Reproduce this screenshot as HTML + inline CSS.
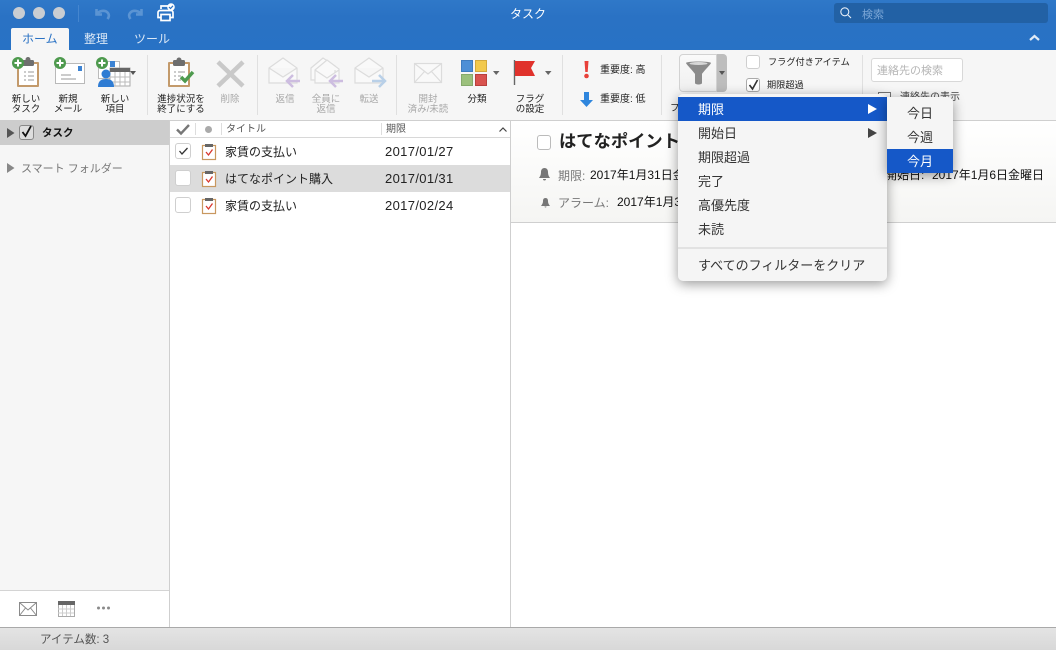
<!DOCTYPE html>
<html lang="ja"><head><meta charset="utf-8"><title>タスク</title>
<style>
*{box-sizing:border-box;margin:0;padding:0}
html,body{width:1056px;height:650px;overflow:hidden;background:#fff}
body{position:relative;font-family:"Liberation Sans","Noto Sans CJK JP",sans-serif;color:#222}
.a{position:absolute}
.t{position:absolute;white-space:nowrap;line-height:1}
.c{position:absolute;text-align:center;line-height:10px;font-size:9.5px;color:#222;white-space:nowrap}
.g{color:#a8a8a8}
.sep{position:absolute;top:55px;width:1px;height:60px;background:#e0e0e0}
svg{position:absolute;overflow:visible}
.cb{position:absolute;background:#fff;border:1px solid #cfcfcf;border-radius:3px}
.m{position:absolute;left:20px;font-size:13px;line-height:26px;height:24px;color:#333;white-space:nowrap}
</style></head><body>
<!-- title bar -->
<div class="a" style="left:0;top:0;width:1056px;height:50px;background:linear-gradient(#2f78c8,#2a72c4 35%,#2872c5)"></div>
<div class="a" style="left:13px;top:7px;width:12px;height:12px;border-radius:50%;background:#c9cdd2"></div>
<div class="a" style="left:33px;top:7px;width:12px;height:12px;border-radius:50%;background:#c9cdd2"></div>
<div class="a" style="left:53px;top:7px;width:12px;height:12px;border-radius:50%;background:#c9cdd2"></div>
<div class="a" style="left:78px;top:5px;width:1px;height:17px;background:#4586cf"></div>
<svg style="left:95px;top:8px" width="16" height="13" fill="none" stroke="#5b94d3" stroke-width="2.600"><path d="M1.500 1v5.500H7M1.500 6.500C4 2.500 10 1.500 13 5c1.500 2 1 4-.5 6"/></svg>
<svg style="left:127px;top:8px" width="16" height="13" fill="none" stroke="#5b94d3" stroke-width="2.600"><path d="M14.500 1v5.500H9M14.500 6.500C12 2.500 6 1.500 3 5c-1.500 2-1 4 .5 6"/></svg>
<svg style="left:157px;top:3px" width="20" height="19" fill="none" stroke="#fff" stroke-width="1.700"><path d="M4 6V3h7M3 7.500h11a2 2 0 0 1 2 2v5h-3M4 14.500H1V9.500a2 2 0 0 1 2-2"/><rect x="4" y="11.500" width="9" height="6"/><circle cx="14" cy="4" r="3.800" fill="#fff" stroke="none"/><path d="M12 4l1.500 1.500L16 2.800" stroke="#2a72c4" stroke-width="1.200"/></svg>
<div class="t" style="left:510px;top:8px;font-size:12px;color:#fff">タスク</div>
<div class="a" style="left:834px;top:3px;width:214px;height:20px;border-radius:3px;background:#2261a5"></div>
<svg style="left:840px;top:7px" width="11" height="11" fill="none" stroke="#e6eef7" stroke-width="1.100"><circle cx="4.800" cy="4.800" r="4"/><path d="M8 8l3 3"/></svg>
<div class="t" style="left:862px;top:8.500px;font-size:11px;line-height:13px;color:#7ba6d6">検索</div>
<div class="a" style="left:11px;top:28px;width:58px;height:22px;background:#f6f6f6;border-radius:2px 2px 0 0"></div>
<div class="t" style="left:22px;top:33px;font-size:12px;color:#2a72c4">ホーム</div>
<div class="t" style="left:84px;top:33px;font-size:12px;color:#dbe8f6">整理</div>
<div class="t" style="left:134px;top:33px;font-size:12px;color:#dbe8f6">ツール</div>
<svg style="left:1029px;top:34px" width="11" height="7" fill="none" stroke="#dfeaf6" stroke-width="2.200"><path d="M1 6l4.500-4L10 6"/></svg>

<!-- ribbon -->
<div class="a" style="left:0;top:50px;width:1056px;height:70px;background:#f6f6f6"></div>
<div class="a" style="left:0;top:120px;width:1056px;height:1px;background:#cfcfcf"></div>
<div class="sep" style="left:147px"></div><div class="sep" style="left:257px"></div><div class="sep" style="left:396px"></div><div class="sep" style="left:562px"></div><div class="sep" style="left:661px"></div><div class="sep" style="left:862px"></div>

<!-- new task -->
<svg style="left:11px;top:56px" width="30" height="32"><rect x="6" y="6" width="22" height="25" rx="1" fill="#c39a6b"/><rect x="8" y="8" width="18" height="21" fill="#fff"/><rect x="11" y="4" width="12" height="6" rx="1.500" fill="#6f6f6f"/><circle cx="17" cy="3.500" r="2.500" fill="#6f6f6f"/><path d="M13 16h2M17 16h6M13 20h2M17 20h6M13 24h2M17 24h6" stroke="#999"/><circle cx="7" cy="7" r="6" fill="#4e9a4e"/><path d="M3.500 7h7M7 3.500v7" stroke="#fff" stroke-width="2"/></svg>
<div class="c" style="left:6px;top:95px;width:40px">新しい<br>タスク</div>
<svg style="left:53px;top:56px" width="32" height="28"><rect x="2.500" y="7.500" width="29" height="20" fill="#fff" stroke="#b9b9b9"/><rect x="25" y="10" width="4" height="5" fill="#3c83d3"/><path d="M8 19h10M8 23h15" stroke="#999"/><circle cx="7" cy="7" r="6" fill="#4e9a4e"/><path d="M3.500 7h7M7 3.500v7" stroke="#fff" stroke-width="2"/></svg>
<div class="c" style="left:48px;top:95px;width:40px">新規<br>メール</div>
<svg style="left:95px;top:56px" width="42" height="32"><rect x="3.500" y="5.500" width="21" height="17" fill="#fff" stroke="#bbb"/><rect x="15" y="5" width="5" height="6" fill="#3c83d3"/><rect x="15" y="12" width="20" height="18" fill="#fff" stroke="#aaa"/><rect x="15" y="12" width="20" height="4" fill="#666"/><path d="M20 16v14M25 16v14M30 16v14M15 21h20M15 26h20" stroke="#bbb"/><circle cx="11" cy="18" r="4.500" fill="#2f7cd3"/><path d="M3 31c0-6 3-8 8-8s8 2 8 8z" fill="#2f7cd3"/><circle cx="7" cy="7" r="6" fill="#4e9a4e"/><path d="M3.500 7h7M7 3.500v7" stroke="#fff" stroke-width="2"/><path d="M35 15h6l-3 4z" fill="#555"/></svg>
<div class="c" style="left:95px;top:95px;width:40px">新しい<br>項目</div>
<!-- finish -->
<svg style="left:167px;top:57px" width="30" height="32"><rect x="1" y="5" width="22" height="25" rx="1" fill="#c39a6b"/><rect x="3" y="7" width="18" height="21" fill="#fff"/><rect x="6" y="3" width="12" height="6" rx="1.500" fill="#6f6f6f"/><circle cx="12" cy="3" r="2.500" fill="#6f6f6f"/><path d="M7 15h2M11 15h7M7 19h2M11 19h3M7 23h2M11 23h3" stroke="#999"/><path d="M14 20l4 4 8-9" fill="none" stroke="#4e9a4e" stroke-width="3.500"/></svg>
<div class="c" style="left:151px;top:95px;width:60px">進捗状況を<br>終了にする</div>
<svg style="left:216px;top:60px" width="30" height="28" fill="none" stroke="#c9c9c9" stroke-width="4.500"><path d="M2 2l25 24M27 2L2 26"/></svg>
<div class="c g" style="left:210px;top:95px;width:40px">削除</div>
<!-- reply group -->
<svg style="left:268px;top:57px" width="34" height="32" fill="none" stroke="#dcdcdc" stroke-width="1.200"><path d="M1 11L15 1l14 10v15H1zM1 11l14 9 14-9" fill="#f9f9f9"/><path d="M32 24H19M25 18l-6 6 6 6" stroke="#cdbde0" stroke-width="2.500"/></svg>
<div class="c g" style="left:265px;top:95px;width:40px">返信</div>
<svg style="left:310px;top:57px" width="34" height="32" fill="none" stroke="#dcdcdc" stroke-width="1.200"><path d="M1 11L13 1l12 8v14H1z" fill="#f9f9f9"/><path d="M5 13L17 3l12 9v14H5zM5 13l12 8 12-8" fill="#f9f9f9"/><path d="M33 24H20M26 18l-6 6 6 6" stroke="#cdbde0" stroke-width="2.500"/></svg>
<div class="c g" style="left:306px;top:95px;width:40px">全員に<br>返信</div>
<svg style="left:354px;top:57px" width="34" height="32" fill="none" stroke="#dcdcdc" stroke-width="1.200"><path d="M1 11L15 1l14 10v15H1zM1 11l14 9 14-9" fill="#f9f9f9"/><path d="M18 24h13M25 18l6 6-6 6" stroke="#b9d0e8" stroke-width="2.500"/></svg>
<div class="c g" style="left:349px;top:95px;width:40px">転送</div>
<svg style="left:414px;top:63px" width="28" height="20" fill="#f9f9f9" stroke="#dcdcdc" stroke-width="1.200"><rect x=".500" y=".500" width="27" height="19"/><path d="M.500 .500L14 11 27.500 .500M.500 19.500l10-11M27.500 19.500l-10-11" fill="none"/></svg>
<div class="c g" style="left:403px;top:95px;width:50px">開封<br>済み/未読</div>
<div class="a" style="left:461px;top:60px;width:12px;height:12px;background:#4d8fd6;border:1px solid #3f7cbf"></div>
<div class="a" style="left:475px;top:60px;width:12px;height:12px;background:#f2c94c;border:1px solid #d3a93c"></div>
<div class="a" style="left:461px;top:74px;width:12px;height:12px;background:#9bc07c;border:1px solid #86a96c"></div>
<div class="a" style="left:475px;top:74px;width:12px;height:12px;background:#d9534f;border:1px solid #b9403d"></div>
<svg style="left:493px;top:71px" width="7" height="4"><path d="M0 0h6.500L3.200 4z" fill="#666"/></svg>
<div class="c" style="left:457px;top:95px;width:40px">分類</div>
<svg style="left:514px;top:60px" width="22" height="26"><path d="M.500 0v25" stroke="#666" stroke-width="1.400"/><path d="M1 1h20l-4 7 4 8H1z" fill="#e0322c"/></svg>
<svg style="left:545px;top:71px" width="7" height="4"><path d="M0 0h6.500L3.200 4z" fill="#666"/></svg>
<div class="c" style="left:510px;top:95px;width:40px">フラグ<br>の設定</div>
<svg style="left:582px;top:60px" width="10" height="20"><path d="M2.500 1h4l-.8 11H3.300z" fill="#e8413a"/><circle cx="4.500" cy="16" r="2.300" fill="#e8413a"/></svg>
<div class="t" style="left:600px;top:66px;font-size:10px;line-height:10px">重要度: 高</div>
<svg style="left:579px;top:91px" width="15" height="17"><path d="M5 1h5v8h4l-6.500 7L1 9h4z" fill="#2f86dd"/></svg>
<div class="t" style="left:600px;top:95px;font-size:10px;line-height:10px">重要度: 低</div>
<!-- filter -->
<div class="a" style="left:679px;top:54px;width:38px;height:38px;background:linear-gradient(#fafafa,#efefef);border:1px solid #d2d2d2;border-radius:4px 0 0 4px"></div>
<div class="a" style="left:717px;top:54px;width:10px;height:38px;background:#bdbdbd;border-radius:0 4px 4px 0"></div>
<svg style="left:719px;top:71px" width="7" height="4"><path d="M0 0h6L3 4z" fill="#555"/></svg>
<svg style="left:685px;top:60px" width="27" height="26"><path d="M1 3c0-2 25-2 25 0 0 1-8 9-9 11v9c0 2-7 2-7 0v-9C9 12 1 4 1 3z" fill="#8b8b8b"/><ellipse cx="13.500" cy="3.500" rx="9" ry="1.500" fill="#d8d8d8"/></svg>
<div class="a" style="left:670px;top:103px;font-size:9.500px;line-height:11px">フ</div>
<div class="cb" style="left:746px;top:55px;width:14px;height:14px"></div>
<div class="t" style="left:768px;top:57px;font-size:9.200px;line-height:10px">フラグ付きアイテム</div>
<div class="cb" style="left:746px;top:78px;width:14px;height:14px;border-color:#aaa"></div>
<svg style="left:748px;top:79px" width="12" height="12" fill="none" stroke="#333" stroke-width="1.600"><path d="M1.500 6l3 4 5-9"/></svg>
<div class="t" style="left:767px;top:81px;font-size:9.200px">期限超過</div>
<div class="a" style="left:871px;top:58px;width:92px;height:24px;background:#fff;border:1px solid #d8d8d8;border-radius:3px"></div>
<div class="t" style="left:877px;top:65px;font-size:11px;line-height:13px;color:#b5b5b5">連絡先の検索</div>
<svg style="left:878px;top:92px" width="16" height="8" fill="#fff" stroke="#777"><rect x=".500" y=".500" width="12" height="10"/></svg>
<div class="t" style="left:900px;top:93px;font-size:10px;line-height:10px;color:#444">連絡先の表示</div>

<!-- sidebar -->
<div class="a" style="left:0;top:121px;width:170px;height:469px;background:#f6f6f6"></div>
<div class="a" style="left:0;top:120px;width:170px;height:25px;background:#cdcdcd"></div>
<svg style="left:7px;top:128px" width="8" height="10"><path d="M0 0l7.500 5L0 10z" fill="#555"/></svg>
<div class="a" style="left:19px;top:125px;width:15px;height:15px;border:1px solid #888;border-radius:3px;background:#dedede"></div>
<svg style="left:21px;top:125px" width="12" height="13" fill="none" stroke="#111" stroke-width="1.800"><path d="M1.500 7l3 4 5.500-10"/></svg>
<div class="t" style="left:42px;top:128px;font-size:10.500px;line-height:10px;font-weight:bold;color:#111">タスク</div>
<svg style="left:7px;top:163px" width="8" height="10"><path d="M0 0l7.500 5L0 10z" fill="#888"/></svg>
<div class="t" style="left:21px;top:164px;font-size:11px;color:#777">スマート フォルダー</div>
<div class="a" style="left:0;top:590px;width:170px;height:1px;background:#d4d4d4"></div>
<div class="a" style="left:169px;top:120px;width:1px;height:508px;background:#cfcfcf"></div>
<svg style="left:19px;top:602px" width="18" height="14" fill="none" stroke="#8a8a8a"><rect x=".500" y=".500" width="17" height="13"/><path d="M.500 .500L9 8 17.500 .500M.500 13.500L6.500 6M17.500 13.500L11.500 6"/></svg>
<svg style="left:58px;top:601px" width="17" height="16" fill="none" stroke="#aaa"><rect x=".500" y=".500" width="16" height="15"/><rect x="0" y="0" width="17" height="4" fill="#666" stroke="none"/><path d="M4.500 4v11M8.500 4v11M12.500 4v11M0 8h16M0 12h16" stroke="#ccc"/></svg>
<svg style="left:97px;top:606px" width="14" height="4" fill="#8a8a8a"><circle cx="1.500" cy="2" r="1.500"/><circle cx="6.500" cy="2" r="1.500"/><circle cx="11.500" cy="2" r="1.500"/></svg>

<!-- list -->
<div class="a" style="left:170px;top:121px;width:340px;height:17px;background:#fff;border-bottom:1px solid #d8d8d8"></div>
<svg style="left:176px;top:124px" width="14" height="11" fill="none" stroke="#777" stroke-width="2.400"><path d="M1 5.500l4 4L13 1"/></svg>
<div class="a" style="left:195px;top:123px;width:1px;height:12px;background:#ddd"></div>
<div class="a" style="left:205px;top:126px;width:7px;height:7px;border-radius:50%;background:#aaa"></div>
<div class="a" style="left:221px;top:123px;width:1px;height:12px;background:#ddd"></div>
<div class="t" style="left:226px;top:124px;font-size:10px;line-height:11px;color:#555">タイトル</div>
<div class="a" style="left:381px;top:123px;width:1px;height:12px;background:#ddd"></div>
<div class="t" style="left:386px;top:124px;font-size:10px;line-height:11px;color:#555">期限</div>
<svg style="left:499px;top:127px" width="8" height="5" fill="none" stroke="#444" stroke-width="1.200"><path d="M.500 4.500L4 1l3.500 3.500"/></svg>
<div class="a" style="left:170px;top:165px;width:340px;height:27px;background:#dcdcdc"></div>
<div class="cb" style="left:175px;top:143px;width:16px;height:16px"></div>
<svg style="left:179px;top:147px" width="9" height="8" fill="none" stroke="#333" stroke-width="1.300"><path d="M.500 4l2.500 3L8.500 1"/></svg>
<div class="cb" style="left:175px;top:170px;width:16px;height:16px"></div>
<div class="cb" style="left:175px;top:197px;width:16px;height:16px"></div>
<svg style="left:202px;top:143px" width="15" height="17"><rect x=".500" y="2.500" width="13" height="14" fill="#fff" stroke="#c8985f" stroke-width="1.200"/><rect x="3" y="1" width="8" height="3" fill="#666"/><path d="M4 9l2.500 3L10.500 6.500" fill="none" stroke="#d8362c" stroke-width="1.300"/></svg>
<svg style="left:202px;top:170px" width="15" height="17"><rect x=".500" y="2.500" width="13" height="14" fill="#fff" stroke="#c8985f" stroke-width="1.200"/><rect x="3" y="1" width="8" height="3" fill="#666"/><path d="M4 9l2.500 3L10.500 6.500" fill="none" stroke="#d8362c" stroke-width="1.300"/></svg>
<svg style="left:202px;top:197px" width="15" height="17"><rect x=".500" y="2.500" width="13" height="14" fill="#fff" stroke="#c8985f" stroke-width="1.200"/><rect x="3" y="1" width="8" height="3" fill="#666"/><path d="M4 9l2.500 3L10.500 6.500" fill="none" stroke="#d8362c" stroke-width="1.300"/></svg>
<div class="t" style="left:225px;top:146px;font-size:12px;line-height:12px">家賃の支払い</div>
<div class="t" style="left:225px;top:173px;font-size:12px;line-height:12px">はてなポイント購入</div>
<div class="t" style="left:225px;top:200px;font-size:12px;line-height:12px">家賃の支払い</div>
<div class="t" style="left:385px;top:145px;font-size:13px;line-height:13px;letter-spacing:.35px">2017/01/27</div>
<div class="t" style="left:385px;top:172px;font-size:13px;line-height:13px;letter-spacing:.35px">2017/01/31</div>
<div class="t" style="left:385px;top:199px;font-size:13px;line-height:13px;letter-spacing:.35px">2017/02/24</div>
<div class="a" style="left:510px;top:120px;width:1px;height:508px;background:#cfcfcf"></div>

<!-- detail -->
<div class="a" style="left:511px;top:121px;width:545px;height:101px;background:linear-gradient(#fff,#f5f5f3)"></div>
<div class="a" style="left:511px;top:222px;width:545px;height:1px;background:#cfcfcf"></div>
<div class="cb" style="left:537px;top:135px;width:14px;height:15px;border-color:#bbb"></div>
<div class="t" style="left:559px;top:132px;font-size:17.300px;line-height:18px;font-weight:bold;color:#222">はてなポイント</div>
<svg style="left:539px;top:168px" width="11" height="13"><path d="M5.500 0C8 0 9 2 9 4c0 3 1 4.500 2 6H0c1-1.500 2-3 2-6 0-2 1-4 3.500-4zM4 11h3a1.500 1.500 0 0 1-3 0z" fill="#777"/></svg>
<div class="t" style="left:558px;top:170px;font-size:12px;line-height:12px;color:#777">期限:</div>
<div class="t" style="left:590px;top:169px;font-size:12px;line-height:13px;color:#111">2017年1月31日金</div>
<svg style="left:541px;top:198px" width="9" height="10"><path d="M4.500 0C6.500 0 7 1.500 7 3c0 2.500 1 3.500 2 5H0c1-1.500 2-2.500 2-5 0-1.500.500-3 2.500-3zM3.500 8.500h2a1 1 0 0 1-2 0z" fill="#777"/></svg>
<div class="t" style="left:558px;top:197px;font-size:12px;line-height:12px;color:#777">アラーム:</div>
<div class="t" style="left:617px;top:196px;font-size:12px;line-height:13px;color:#111">2017年1月31</div>
<div class="t" style="left:885px;top:169px;font-size:12px;line-height:13px;color:#111">開始日:</div>
<div class="t" style="left:932px;top:169px;font-size:12px;line-height:13px;color:#111">2017年1月6日金曜日</div>

<!-- footer -->
<div class="a" style="left:0;top:627px;width:1056px;height:1px;background:#a9a9a9"></div>
<div class="a" style="left:0;top:628px;width:1056px;height:22px;background:linear-gradient(#e4e4e4,#d8d8d8)"></div>
<div class="t" style="left:40px;top:634px;font-size:11.500px;line-height:12px;color:#555">アイテム数: 3</div>

<!-- menu -->
<div class="a" style="left:678px;top:94px;width:209px;height:187px;background:#f5f5f5;border-radius:5px;box-shadow:0 3px 12px rgba(0,0,0,.4)">
<div class="a" style="left:0;top:3px;width:209px;height:24px;background:#1558c8"></div>
<div class="m" style="top:3px;color:#fff">期限</div>
<svg style="left:190px;top:10px" width="10" height="10"><path d="M0 0l9 5-9 5z" fill="#fff"/></svg>
<div class="m" style="top:27px">開始日</div>
<svg style="left:190px;top:34px" width="10" height="10"><path d="M0 0l9 5-9 5z" fill="#444"/></svg>
<div class="m" style="top:51px">期限超過</div>
<div class="m" style="top:75px">完了</div>
<div class="m" style="top:99px">高優先度</div>
<div class="m" style="top:123px">未読</div>
<div class="a" style="left:0;top:153px;width:209px;height:2px;background:#e2e2e2"></div>
<div class="m" style="top:159px">すべてのフィルターをクリア</div>
</div>
<div class="a" style="left:887px;top:97px;width:66px;height:76px;background:#f5f5f5;border-radius:0 5px 5px 0;box-shadow:0 3px 12px rgba(0,0,0,.4)">
<div class="a" style="left:0;top:52px;width:66px;height:24px;background:#1558c8"></div>
<div class="m" style="left:20px;top:4px">今日</div>
<div class="m" style="left:20px;top:28px">今週</div>
<div class="m" style="left:20px;top:52px;color:#fff">今月</div>
</div>
</body></html>
